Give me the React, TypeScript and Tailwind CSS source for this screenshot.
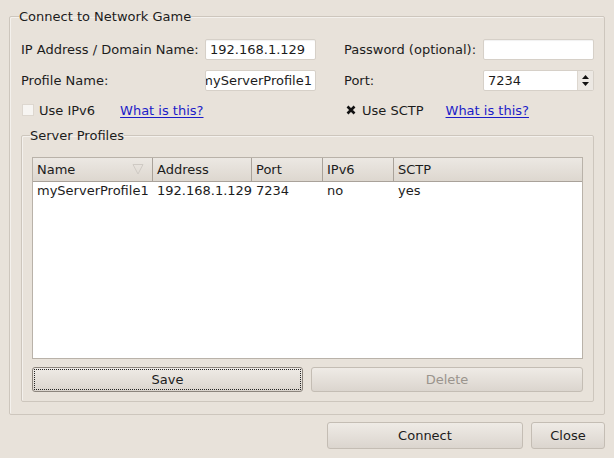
import React from "react";

const COLS = [
  { name: "Name", w: "w-[120px]" },
  { name: "Address", w: "w-[99px]" },
  { name: "Port", w: "w-[71px]" },
  { name: "IPv6", w: "w-[71px]" },
  { name: "SCTP", w: "flex-1" },
];

const ROWS = [["myServerProfile1", "192.168.1.129", "7234", "no", "yes"]];

function TextBox({ value }: { value?: string }) {
  return (
    <div className="h-[21px] w-[111px] bg-white border border-[#d6d0c8] rounded-[2px] shadow-[inset_0_1px_1px_rgba(0,0,0,0.06)] flex items-center overflow-hidden">
      <span className="whitespace-nowrap px-[4px]">{value}</span>
    </div>
  );
}

function Link() {
  return <span className="text-[#1c1cc8] underline underline-offset-2">What is this?</span>;
}

function Btn({ label, cls = "", disabled, focus }: { label: string; cls?: string; disabled?: boolean; focus?: boolean }) {
  return (
    <div
      className={
        "relative flex items-center justify-center rounded-[3px] border bg-gradient-to-b from-[#efebe6] to-[#dbd5ce] " +
        (focus ? "border-[#8c857d] " : "border-[#c4bdb4] ") +
        (disabled ? "text-[#9a948d] " : "text-[#1c1c1c] ") +
        cls
      }
    >
      {focus && <div className="absolute inset-[1px] border border-dotted border-[#222]" />}
      {label}
    </div>
  );
}

export default function App() {
  return (
    <div className="min-h-[458px] w-[614px] bg-[#e8e2da] px-[9px] pt-[9px] text-[13px] leading-[15px] text-[#1c1c1c] font-['DejaVu_Sans',sans-serif]">
      <fieldset className="border border-[#cdc6bd] rounded-[2px] pl-[11px] pr-[10px] pb-[12px] shadow-[inset_1px_1px_0_#f4f1ed]">
        <legend className="-ml-[2px] px-0">Connect to Network Game</legend>

        {/* form */}
        <div className="mt-[15px] grid grid-cols-[184px_111px_28px_139px_111px] gap-y-[10px] items-center">
          <span>IP Address / Domain Name:</span>
          <TextBox value="192.168.1.129" />
          <span />
          <span>Password (optional):</span>
          <TextBox />

          <span>Profile Name:</span>
          <div className="h-[21px] w-[111px] bg-white border border-[#d6d0c8] rounded-[2px] flex items-center justify-end overflow-hidden">
            <span className="whitespace-nowrap pr-[3px]">myServerProfile1</span>
          </div>
          <span />
          <span>Port:</span>
          <div className="h-[21px] w-[111px] bg-white border border-[#d6d0c8] rounded-[2px] flex items-center">
            <span className="pl-[4px] flex-1">7234</span>
            <div className="h-full w-[16px] bg-[#ece8e3] border-l border-[#ddd7cf] flex flex-col items-center justify-center gap-[3px]">
              <svg width="7" height="4" viewBox="0 0 7 4"><path d="M0 4 L3.5 0 L7 4Z" fill="#111" /></svg>
              <svg width="7" height="4" viewBox="0 0 7 4"><path d="M0 0 L3.5 4 L7 0Z" fill="#111" /></svg>
            </div>
          </div>
        </div>

        <div className="mt-[9px] h-[20px] grid grid-cols-[184px_111px_28px_139px_111px] items-center">
          <div className="col-span-2 flex items-center">
            <div className="w-[12px] h-[12px] bg-[#f7f5f2] border border-[#ddd7cf] ml-[1px]" />
            <span className="ml-[5px]">Use IPv6</span>
            <span className="ml-[25px]"><Link /></span>
          </div>
          <span />
          <div className="col-span-2 flex items-center">
            <div className="w-[12px] h-[12px] flex items-center justify-center ml-[1px]">
              <svg width="10" height="10" viewBox="0 0 10 10"><path d="M1.5 1.5 L8.5 8.5 M8.5 1.5 L1.5 8.5" stroke="#111" strokeWidth="2.6" /></svg>
            </div>
            <span className="ml-[5px]">Use SCTP</span>
            <span className="ml-[22px]"><Link /></span>
          </div>
        </div>

        {/* Server profiles */}
        <fieldset className="mt-[8px] border border-[#cdc6bd] rounded-[2px] px-[10px] pb-[9px] shadow-[inset_1px_1px_0_#f4f1ed]">
          <legend className="-ml-[2px] px-0">Server Profiles</legend>
          <div className="mt-[14px] h-[202px] bg-white border border-[#b9b2a9] flex flex-col">
            <div className="flex h-[24px] bg-gradient-to-b from-[#ece8e3] to-[#ddd7cf] border-b border-[#a9a29a]">
              {COLS.map((c, i) => (
                <div
                  key={c.name}
                  className={
                    c.w +
                    " relative flex items-center pl-[4px] border-[#a9a29a] " +
                    (i < COLS.length - 1 ? "border-r" : "")
                  }
                >
                  {c.name}
                  {i === 0 && (
                    <svg className="absolute right-[8px] top-[5px]" width="12" height="12" viewBox="0 0 12 12">
                      <path d="M1 1.5 H11 L6 11 Z" fill="none" stroke="#cfcac4" strokeWidth="1" />
                    </svg>
                  )}
                </div>
              ))}
            </div>
            {ROWS.map((r) => (
              <div key={r[0]} className="flex h-[17px] items-center">
                {r.map((v, i) => (
                  <div key={i} className={COLS[i].w + " pl-[4px] whitespace-nowrap"}>
                    {v}
                  </div>
                ))}
              </div>
            ))}
          </div>
          <div className="mt-[8px] flex gap-[8px]">
            <Btn label="Save" cls="h-[25px] w-[271px]" focus />
            <Btn label="Delete" cls="h-[25px] flex-1" disabled />
          </div>
        </fieldset>
      </fieldset>

      <div className="mt-[7px] flex justify-end gap-[8px]">
        <Btn label="Connect" cls="h-[27px] w-[196px]" />
        <Btn label="Close" cls="h-[27px] w-[74px]" />
      </div>
    </div>
  );
}
